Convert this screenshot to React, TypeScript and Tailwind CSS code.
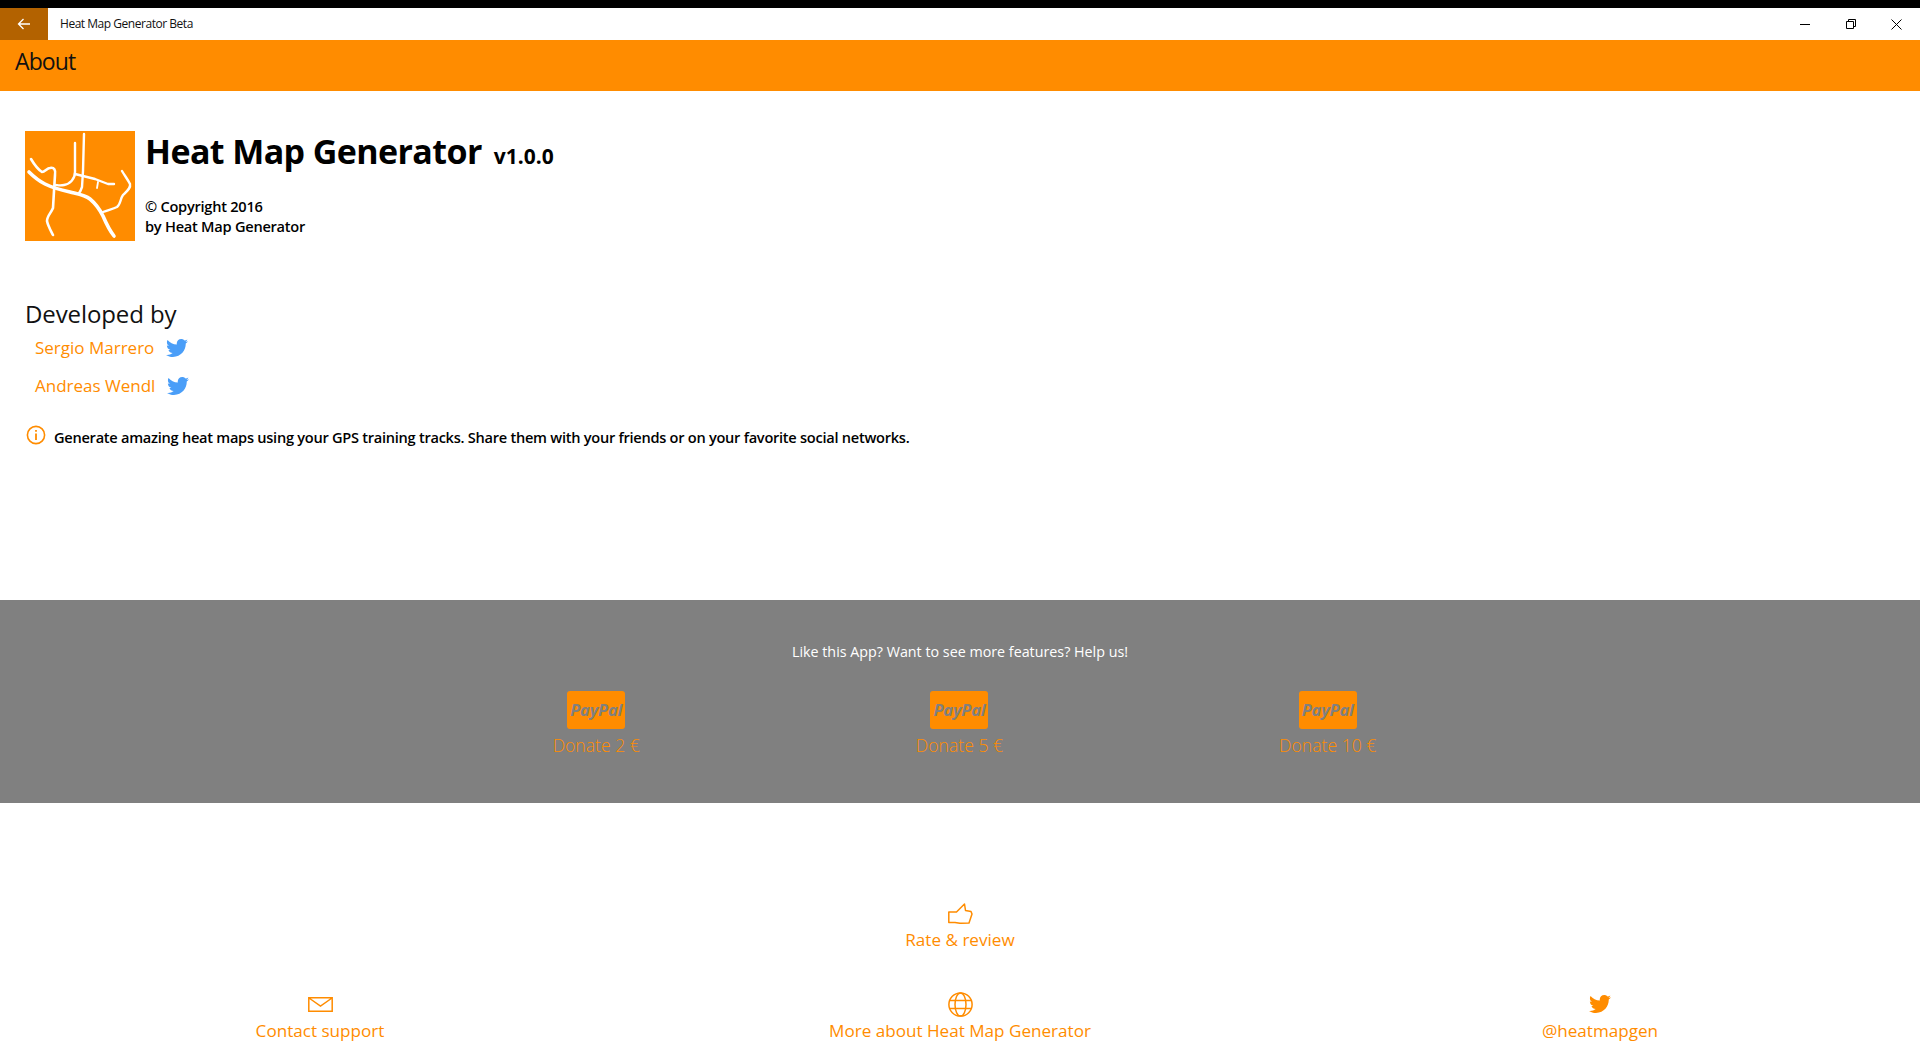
import { FaTwitter } from "react-icons/fa"

const sans = "font-['Open_Sans','Noto_Sans',sans-serif]"

function Logo() {
  return (
    <div className="h-[110px] w-[110px] shrink-0 bg-[#ff8c00]">
      <svg viewBox="0 0 110 110" className="h-full w-full" fill="none" stroke="#fff" strokeLinecap="round" strokeLinejoin="round">
        <path strokeWidth="3.6" d="M4 41C9 46 14 50 20 53C28 57 36 59 45 61C53 63 60 64 65 68C71 73 75 79 78 85C81 92 85 100 89 105" />
        <path strokeWidth="2.6" d="M6 28C9 33 12 38 17 41C20 41 22 37 25 37C29 36 31 39 30 44L29 60L28 77C26 82 22 85 22 90C23 95 26 100 28 104" />
        <path strokeWidth="2.4" d="M50 12L50 41C50 48 45 53 39 54C35 55 32 54 30 54" />
        <path strokeWidth="2.4" d="M59 3L58 40L57 56C56 59 55 61 54 62" />
        <path strokeWidth="2.4" d="M50 43L70 48L83 53L89 53" />
        <path strokeWidth="1.8" d="M73 51L72 57" />
        <path strokeWidth="2.4" d="M97 40C100 45 103 49 105 53C106 57 102 60 98 64C95 68 96 73 92 76C88 78 83 79 78 81" />
      </svg>
    </div>
  )
}

function Developer({ name }: { name: string }) {
  return (
    <div className="flex h-[38px] items-center pl-[10px]">
      <span className={`${sans} text-[17px] text-[#ff8c00]`}>{name}</span>
      <FaTwitter className="ml-[12px] h-[22px] w-[22px] text-[#4a9ef8]" />
    </div>
  )
}

function Donate({ label }: { label: string }) {
  return (
    <div className="flex flex-col items-center">
      <div className="flex h-[38px] w-[58px] items-center justify-center rounded-[3px] bg-[#ff8c00]">
        <span className="font-['Open_Sans',sans-serif] text-[16.5px] font-bold italic leading-none tracking-[-0.2px] text-[#808080]">PayPal</span>
      </div>
      <span className={`${sans} mt-[3px] whitespace-nowrap text-[17.6px] font-light leading-[26px] text-[#ff8c00]`}>{label}</span>
    </div>
  )
}

function Action({ icon, label }: { icon: React.ReactNode; label: string }) {
  return (
    <div className="flex flex-col items-center">
      <div className="flex h-[28px] items-center justify-center">{icon}</div>
      <span className={`${sans} whitespace-nowrap text-[17.1px] leading-[26px] text-[#ff8c00]`}>{label}</span>
    </div>
  )
}

export default function App() {
  return (
    <div className={`${sans} flex h-[1058px] w-[1920px] flex-col overflow-hidden bg-white text-black`}>
      {/* Title bar */}
      <div className="h-2 bg-black" />
      <div className="flex h-8 items-center bg-white">
        <div className="flex h-8 w-12 items-center justify-center bg-[#b36200]">
          <svg width="14" height="12" viewBox="0 0 14 12" fill="none" stroke="#fff" strokeWidth="1.3">
            <path d="M13 6H1.5M6.5 1L1.5 6L6.5 11" />
          </svg>
        </div>
        <span className="ml-3 text-[12px] tracking-[-0.47px] text-[#111]">Heat Map Generator Beta</span>
        <div className="ml-auto flex items-center">
          <div className="flex w-[46px] justify-center">
            <svg width="10" height="10" viewBox="0 0 10 10" stroke="#000" fill="none"><path d="M0 5.5H10" /></svg>
          </div>
          <div className="flex w-[46px] justify-center">
            <svg width="10" height="10" viewBox="0 0 10 10" stroke="#000" fill="none"><path d="M0.5 2.5H7.5V9.5H0.5ZM2.5 2.5V0.5H9.5V7.5H7.5" /></svg>
          </div>
          <div className="flex w-[46px] justify-center pr-[1px]">
            <svg width="11" height="11" viewBox="0 0 11 11" stroke="#000" fill="none"><path d="M0.5 0.5L10.5 10.5M10.5 0.5L0.5 10.5" /></svg>
          </div>
        </div>
      </div>

      {/* Page header */}
      <div className="h-[51px] bg-[#ff8c00] pl-[15px] pt-[3px]">
        <span className="text-[23px] leading-[36px] tracking-[-0.9px] text-[#111]">About</span>
      </div>

      {/* App info */}
      <div className="h-[509px] px-[25px] pt-10">
        <div className="flex">
          <Logo />
          <div className="ml-[10px]">
            <div className="-mt-[3px] flex items-baseline">
              <span className="text-[34px] font-bold leading-[46px] tracking-[-0.6px]">Heat Map Generator</span>
              <span className="ml-3 text-[21px] font-bold">v1.0.0</span>
            </div>
            <div className="mt-[22px] text-[14.6px] font-semibold leading-5 tracking-[-0.25px]">© Copyright 2016</div>
            <div className="text-[14.6px] font-semibold leading-5 tracking-[-0.25px]">by Heat Map Generator</div>
          </div>
        </div>
        <div className="mt-[55px] text-[24px] leading-[36px] tracking-[-0.1px] text-[#111]">Developed by</div>
        <div className="-mt-[3px]">
          <Developer name="Sergio Marrero" />
          <Developer name="Andreas Wendl" />
        </div>
        <div className="mt-[22px] flex items-center">
          <svg width="20" height="20" viewBox="0 0 20 20" fill="none" stroke="#ff8c00" strokeWidth="1.6" className="-mt-1 ml-px">
            <circle cx="10" cy="10" r="8.6" />
            <path d="M10 8.5V15M10 5V6.8" strokeWidth="1.8" />
          </svg>
          <span className="ml-2 text-[14.6px] font-semibold leading-5 tracking-[-0.27px]">
            Generate amazing heat maps using your GPS training tracks. Share them with your friends or on your favorite social networks.
          </span>
        </div>
      </div>

      {/* Donations */}
      <div className="h-[203px] bg-[#808080] pt-[40px]">
        <div className="text-center text-[14.3px] leading-6 text-white">Like this App? Want to see more features? Help us!</div>
        <div className="mt-[27px] flex justify-center gap-[276px] pl-[9px]">
          <Donate label="Donate 2 €" />
          <Donate label="Donate 5 €" />
          <Donate label="Donate 10 €" />
        </div>
      </div>

      {/* Links */}
      <div className="flex flex-col pt-[96px]">
        <Action
          label="Rate & review"
          icon={
            <svg width="25" height="21" viewBox="0 0 25 21" fill="none" stroke="#ff8c00" strokeWidth="1.5" strokeLinejoin="round">
              <path d="M0.8 9H8.5L16.5 1L17.5 7.5L23 8.5L24 11L21 20L12 20.3L7 19.5H0.8Z" />
            </svg>
          }
        />
        <div className="mt-[37px] grid grid-cols-3">
          <Action
            label="Contact support"
            icon={
              <svg width="25" height="15" viewBox="0 0 25 15" fill="none" stroke="#ff8c00" strokeWidth="1.5">
                <path d="M0.8 0.8H24.2V14.2H0.8ZM1 1L12.5 9L24 1" />
              </svg>
            }
          />
          <Action
            label="More about Heat Map Generator"
            icon={
              <svg width="25" height="25" viewBox="0 0 25 25" fill="none" stroke="#ff8c00" strokeWidth="1.5">
                <circle cx="12.5" cy="12.5" r="11.6" />
                <ellipse cx="12.5" cy="12.5" rx="5.5" ry="11.6" />
                <path d="M2 8.5H23M2 16.5H23" />
              </svg>
            }
          />
          <Action label="@heatmapgen" icon={<FaTwitter className="h-[22px] w-[22px] text-[#ff8c00]" />} />
        </div>
      </div>
    </div>
  )
}
